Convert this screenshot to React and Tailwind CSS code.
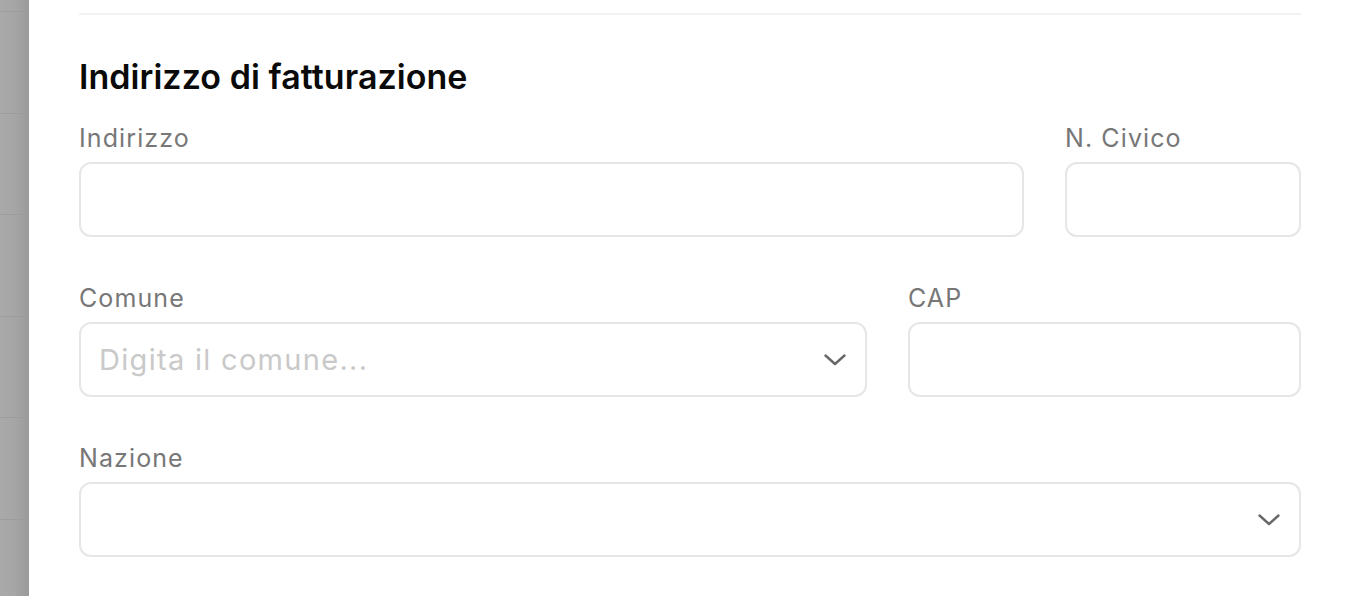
import React from 'react'

const font = { fontFamily: 'Inter, "Noto Sans", sans-serif' }

const Chevron = () => (
  <svg width="22" height="12" viewBox="0 0 22 12" fill="none" className="shrink-0">
    <path d="M1.5 1.5 L11 10 L20.5 1.5" stroke="#686868" strokeWidth="2.4" strokeLinecap="round" strokeLinejoin="round" />
  </svg>
)

const Field = ({ label, className = '', placeholder, select }) => (
  <div className={`flex flex-col ${className}`}>
    <label className="text-[25px] leading-[33px] font-normal tracking-[1.1px] text-[#777777]">{label}</label>
    <div className="mt-[7px] h-[75px] rounded-[12px] border-2 border-[#e6e6e6] bg-white flex items-center pl-[18px] pr-[19px]">
      <span className="flex-1 text-[29px] tracking-[1.3px] text-[#c9c9c9] truncate">{placeholder}</span>
      {select && <Chevron />}
    </div>
  </div>
)

export default function App() {
  const rows = [0, 1, 2, 3, 4, 5]
  return (
    <div className="flex h-[596px] w-full overflow-hidden bg-white" style={font}>
      {/* overlay strip */}
      <div className="w-[29px] shrink-0 bg-gradient-to-r from-[#a9a9a9] via-[#a6a6a6] to-[#9a9a9a] flex flex-col pt-[11px]">
        {rows.map(i => (
          <div key={i} className="h-[101.6px] shrink-0 border-t border-[#9c9c9c]" />
        ))}
      </div>

      <div className="flex-1 pl-[50px] pr-[51px] pt-[13px]">
        <div className="h-[2px] bg-[#f2f2f2]" />

        <h2 className="mt-[42px] text-[34px] leading-[40px] font-semibold text-[#0a0a0a] tracking-[0.05px]">
          Indirizzo di fatturazione
        </h2>

        <div className="mt-[25px] flex flex-col gap-[45px]">
          <div className="flex gap-[41px]">
            <Field label="Indirizzo" className="flex-1" />
            <Field label="N. Civico" className="w-[236px]" />
          </div>
          <div className="flex gap-[41px]">
            <Field label="Comune" className="w-[788px]" placeholder="Digita il comune..." select />
            <Field label="CAP" className="flex-1" />
          </div>
          <Field label="Nazione" select />
        </div>
      </div>
    </div>
  )
}
